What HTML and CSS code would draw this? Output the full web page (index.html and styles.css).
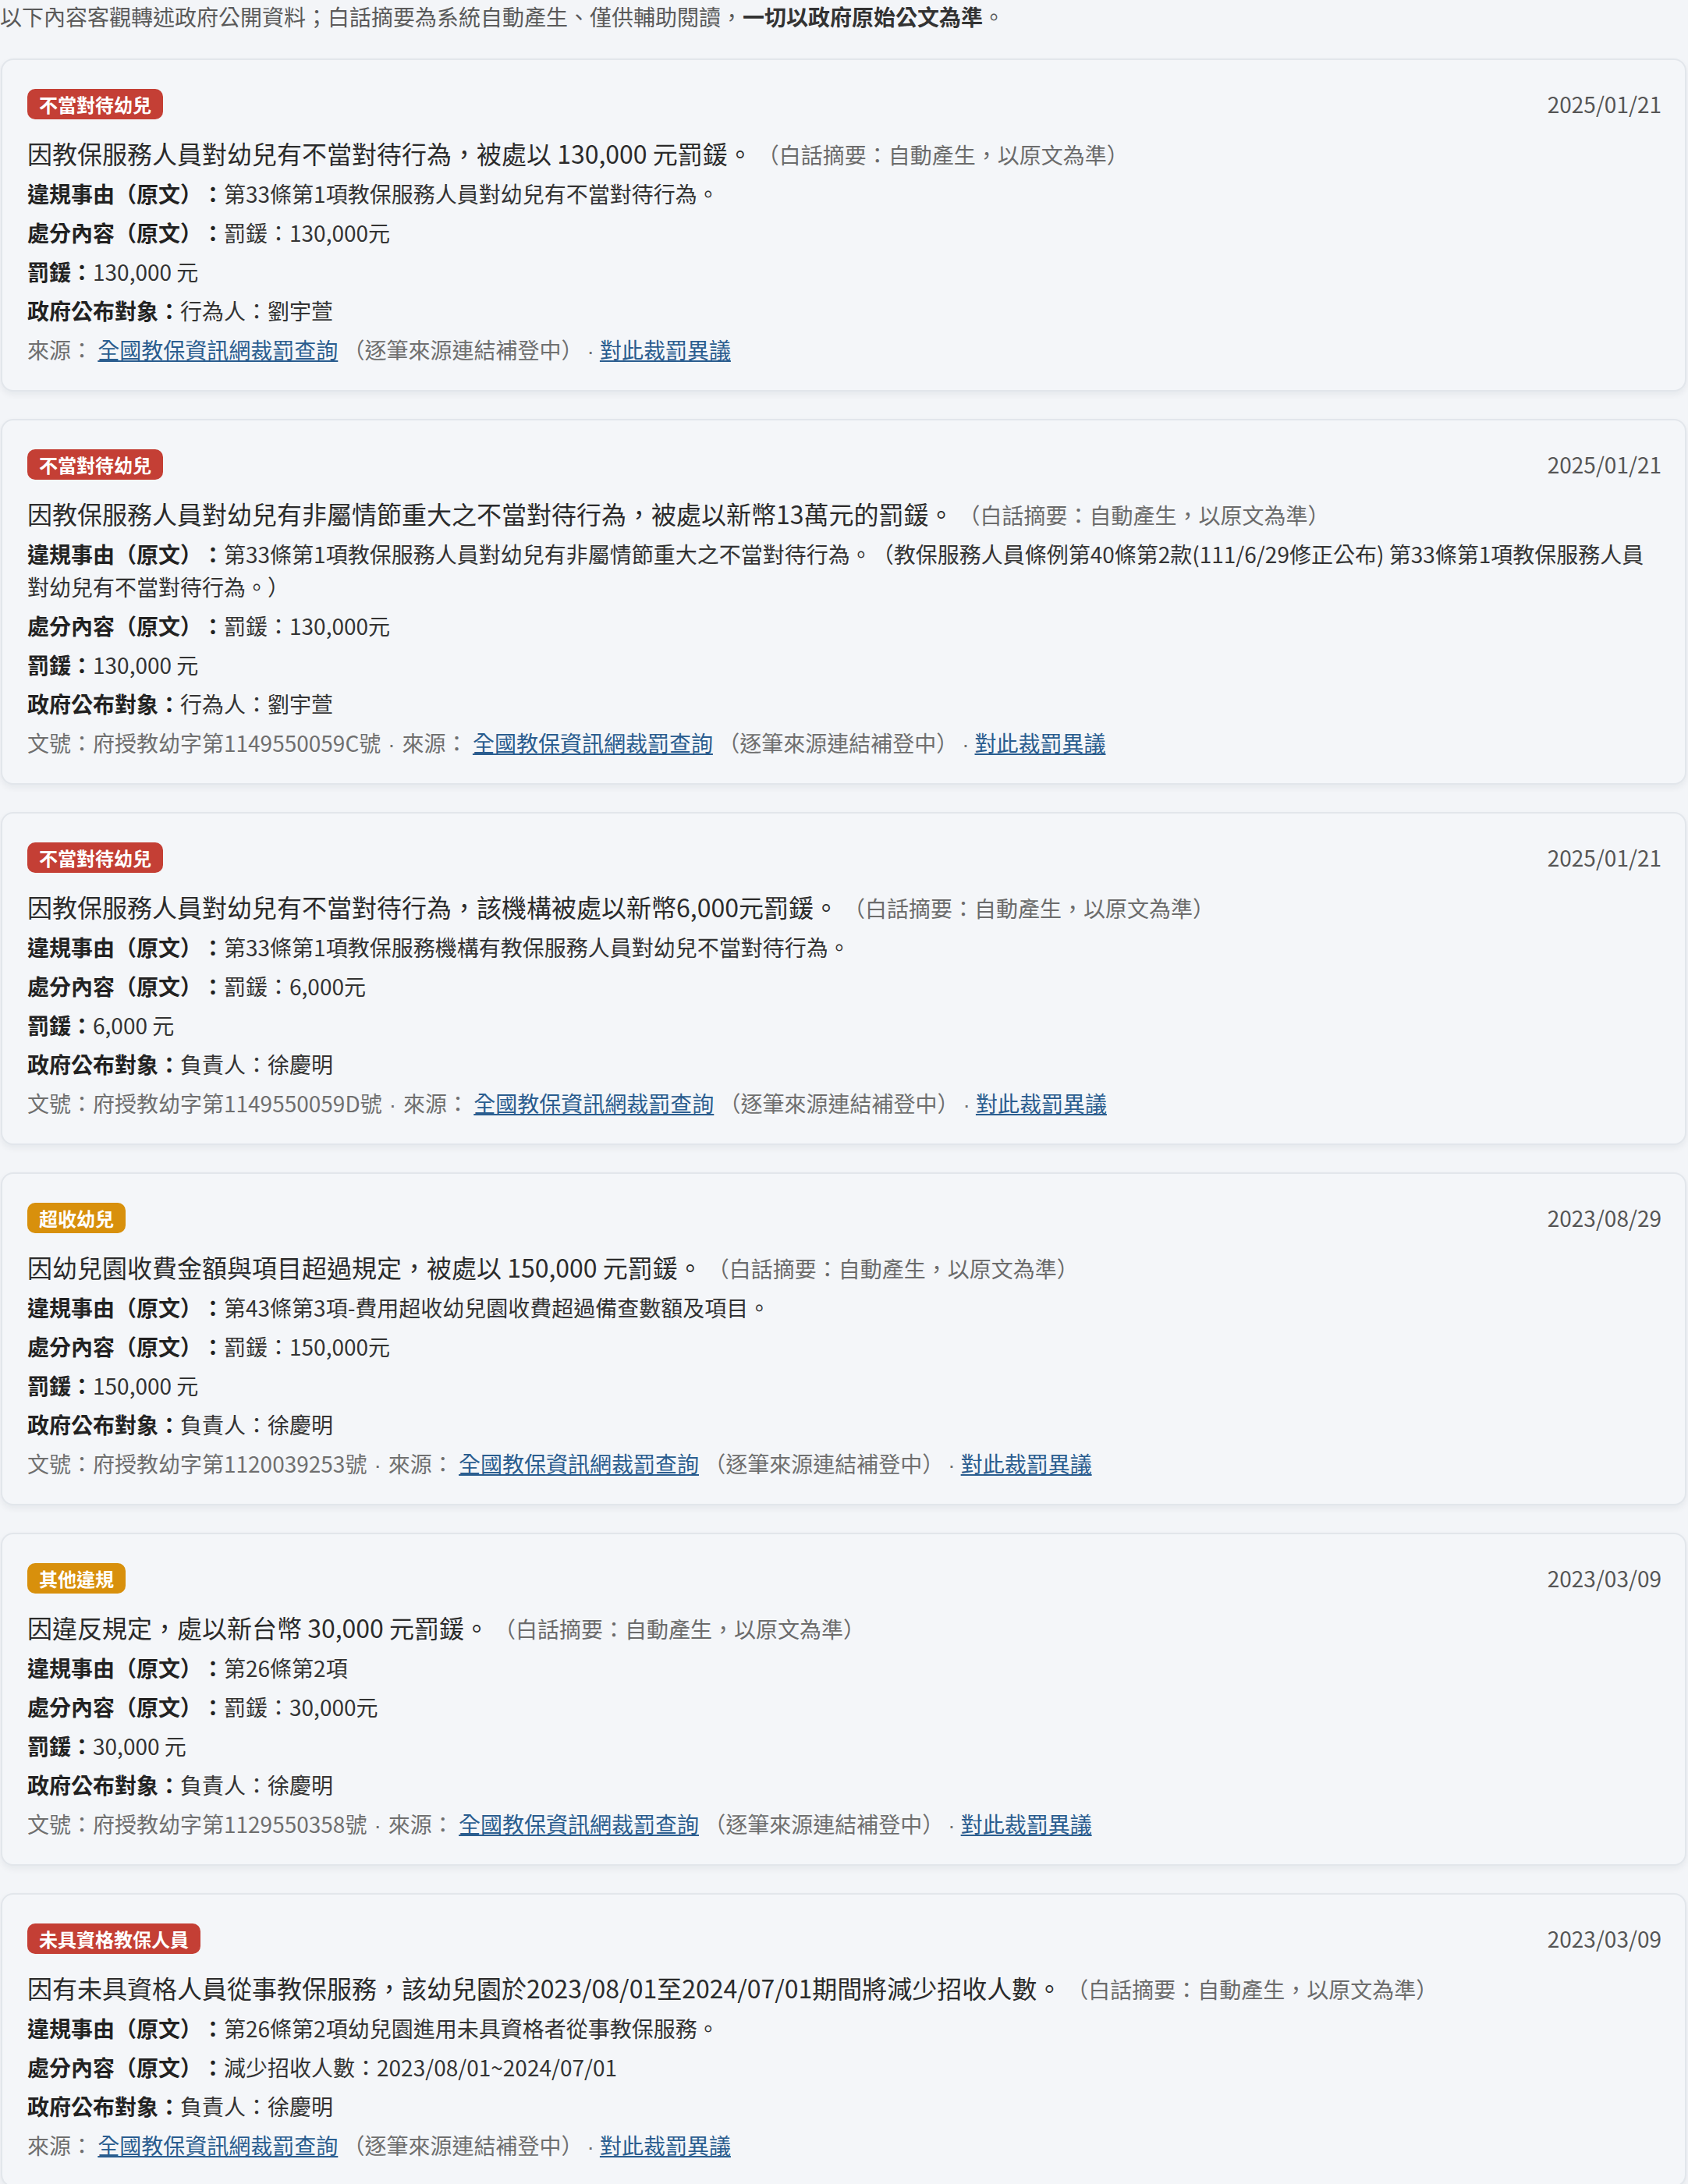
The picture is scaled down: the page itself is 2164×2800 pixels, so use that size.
FILE: index.html
```html
<!DOCTYPE html>
<html lang="zh-Hant">
<head>
<meta charset="utf-8">
<title>裁罰紀錄</title>
<link rel="stylesheet" href="styles.css">
</head>
<body>
<main class="page">
  <p class="intro">以下內容客觀轉述政府公開資料；白話摘要為系統自動產生、僅供輔助閱讀，<strong>一切以政府原始公文為準</strong>。</p>

  <article class="card">
    <div class="card-head">
      <span class="badge badge-red">不當對待幼兒</span>
      <span class="date">2025/01/21</span>
    </div>
    <h2 class="title">因教保服務人員對幼兒有不當對待行為，被處以 130,000 元罰鍰。<span class="note">（白話摘要：自動產生，以原文為準）</span></h2>
    <p class="row"><b>違規事由（原文）：</b>第33條第1項教保服務人員對幼兒有不當對待行為。</p>
    <p class="row"><b>處分內容（原文）：</b>罰鍰：130,000元</p>
    <p class="row"><b>罰鍰：</b>130,000 元</p>
    <p class="row"><b>政府公布對象：</b>行為人：劉宇萱</p>
    <p class="row source">來源： <a href="#">全國教保資訊網裁罰查詢</a> （逐筆來源連結補登中）<span class="dot">·</span><a href="#">對此裁罰異議</a></p>
  </article>

  <article class="card">
    <div class="card-head">
      <span class="badge badge-red">不當對待幼兒</span>
      <span class="date">2025/01/21</span>
    </div>
    <h2 class="title">因教保服務人員對幼兒有非屬情節重大之不當對待行為，被處以新幣13萬元的罰鍰。<span class="note">（白話摘要：自動產生，以原文為準）</span></h2>
    <p class="row"><b>違規事由（原文）：</b>第33條第1項教保服務人員對幼兒有非屬情節重大之不當對待行為。（教保服務人員條例第40條第2款(111/6/29修正公布) 第33條第1項教保服務人員對幼兒有不當對待行為。）</p>
    <p class="row"><b>處分內容（原文）：</b>罰鍰：130,000元</p>
    <p class="row"><b>罰鍰：</b>130,000 元</p>
    <p class="row"><b>政府公布對象：</b>行為人：劉宇萱</p>
    <p class="row source">文號：府授教幼字第1149550059C號<span class="dot dot-mid">·</span>來源： <a href="#">全國教保資訊網裁罰查詢</a> （逐筆來源連結補登中）<span class="dot">·</span><a href="#">對此裁罰異議</a></p>
  </article>

  <article class="card">
    <div class="card-head">
      <span class="badge badge-red">不當對待幼兒</span>
      <span class="date">2025/01/21</span>
    </div>
    <h2 class="title">因教保服務人員對幼兒有不當對待行為，該機構被處以新幣6,000元罰鍰。<span class="note">（白話摘要：自動產生，以原文為準）</span></h2>
    <p class="row"><b>違規事由（原文）：</b>第33條第1項教保服務機構有教保服務人員對幼兒不當對待行為。</p>
    <p class="row"><b>處分內容（原文）：</b>罰鍰：6,000元</p>
    <p class="row"><b>罰鍰：</b>6,000 元</p>
    <p class="row"><b>政府公布對象：</b>負責人：徐慶明</p>
    <p class="row source">文號：府授教幼字第1149550059D號<span class="dot dot-mid">·</span>來源： <a href="#">全國教保資訊網裁罰查詢</a> （逐筆來源連結補登中）<span class="dot">·</span><a href="#">對此裁罰異議</a></p>
  </article>

  <article class="card">
    <div class="card-head">
      <span class="badge badge-orange">超收幼兒</span>
      <span class="date">2023/08/29</span>
    </div>
    <h2 class="title">因幼兒園收費金額與項目超過規定，被處以 150,000 元罰鍰。<span class="note">（白話摘要：自動產生，以原文為準）</span></h2>
    <p class="row"><b>違規事由（原文）：</b>第43條第3項-費用超收幼兒園收費超過備查數額及項目。</p>
    <p class="row"><b>處分內容（原文）：</b>罰鍰：150,000元</p>
    <p class="row"><b>罰鍰：</b>150,000 元</p>
    <p class="row"><b>政府公布對象：</b>負責人：徐慶明</p>
    <p class="row source">文號：府授教幼字第1120039253號<span class="dot dot-mid">·</span>來源： <a href="#">全國教保資訊網裁罰查詢</a> （逐筆來源連結補登中）<span class="dot">·</span><a href="#">對此裁罰異議</a></p>
  </article>

  <article class="card">
    <div class="card-head">
      <span class="badge badge-orange">其他違規</span>
      <span class="date">2023/03/09</span>
    </div>
    <h2 class="title">因違反規定，處以新台幣 30,000 元罰鍰。<span class="note">（白話摘要：自動產生，以原文為準）</span></h2>
    <p class="row"><b>違規事由（原文）：</b>第26條第2項</p>
    <p class="row"><b>處分內容（原文）：</b>罰鍰：30,000元</p>
    <p class="row"><b>罰鍰：</b>30,000 元</p>
    <p class="row"><b>政府公布對象：</b>負責人：徐慶明</p>
    <p class="row source">文號：府授教幼字第1129550358號<span class="dot dot-mid">·</span>來源： <a href="#">全國教保資訊網裁罰查詢</a> （逐筆來源連結補登中）<span class="dot">·</span><a href="#">對此裁罰異議</a></p>
  </article>

  <article class="card">
    <div class="card-head">
      <span class="badge badge-red">未具資格教保人員</span>
      <span class="date">2023/03/09</span>
    </div>
    <h2 class="title">因有未具資格人員從事教保服務，該幼兒園於2023/08/01至2024/07/01期間將減少招收人數。<span class="note">（白話摘要：自動產生，以原文為準）</span></h2>
    <p class="row"><b>違規事由（原文）：</b>第26條第2項幼兒園進用未具資格者從事教保服務。</p>
    <p class="row"><b>處分內容（原文）：</b>減少招收人數：2023/08/01~2024/07/01</p>
    <p class="row"><b>政府公布對象：</b>負責人：徐慶明</p>
    <p class="row source">來源： <a href="#">全國教保資訊網裁罰查詢</a> （逐筆來源連結補登中）<span class="dot">·</span><a href="#">對此裁罰異議</a></p>
  </article>
</main>
</body>
</html>
```

FILE: styles.css
```css
html, body {
  margin: 0;
  padding: 0;
  background: #f3f5f8;
}

body {
  font-family: "Noto Sans CJK TC", "Noto Sans", sans-serif;
  color: #333;
  text-spacing-trim: space-all;
}

.page {
  display: flex;
  flex-direction: column;
}

.intro {
  margin: 0 0 33px 0;
  font-size: 28px;
  line-height: 42px;
  color: #5a5a5a;
}

.intro strong {
  color: #333;
  font-weight: 700;
}

.card {
  margin: 0 2px 35px 1px;
  padding: 32px 30px 28px 32px;
  border: 2px solid #e2e6eb;
  border-radius: 16px;
  background: #f4f6f9;
  box-shadow: 0 4px 8px rgba(20, 30, 50, 0.06);
}

.card-head {
  display: flex;
  justify-content: space-between;
  align-items: center;
  height: 48px;
  margin-bottom: 15px;
}

.badge {
  display: inline-block;
  height: 39px;
  line-height: 39px;
  padding: 0 15px;
  border-radius: 10px;
  font-size: 24px;
  font-weight: 700;
  color: #fff;
}

.badge-red {
  background: #c43f35;
}

.badge-orange {
  background: #d8900c;
}

.date {
  font-size: 28px;
  line-height: 42px;
  color: #555;
}

.title {
  margin: 0 0 7px 0;
  font-size: 32px;
  line-height: 48px;
  font-weight: 400;
  color: #2b2b2b;
}

.note {
  margin-left: 6px;
  font-size: 28px;
  line-height: 1;
  color: #6b6b6b;
}

.row {
  margin: 0 0 8px 0;
  font-size: 28px;
  line-height: 42px;
  color: #333;
}

.row:last-child {
  margin-bottom: 0;
}

.row b {
  font-weight: 700;
  color: #222;
}

.source {
  color: #6f6f6f;
}

.source a {
  color: #2a5d8f;
  text-decoration: underline;
}

.dot {
  font-family: "Liberation Sans", sans-serif;
  margin: 0 7px 0 5px;
}

.dot-mid {
  margin: 0 9px 0 9px;
}
```
